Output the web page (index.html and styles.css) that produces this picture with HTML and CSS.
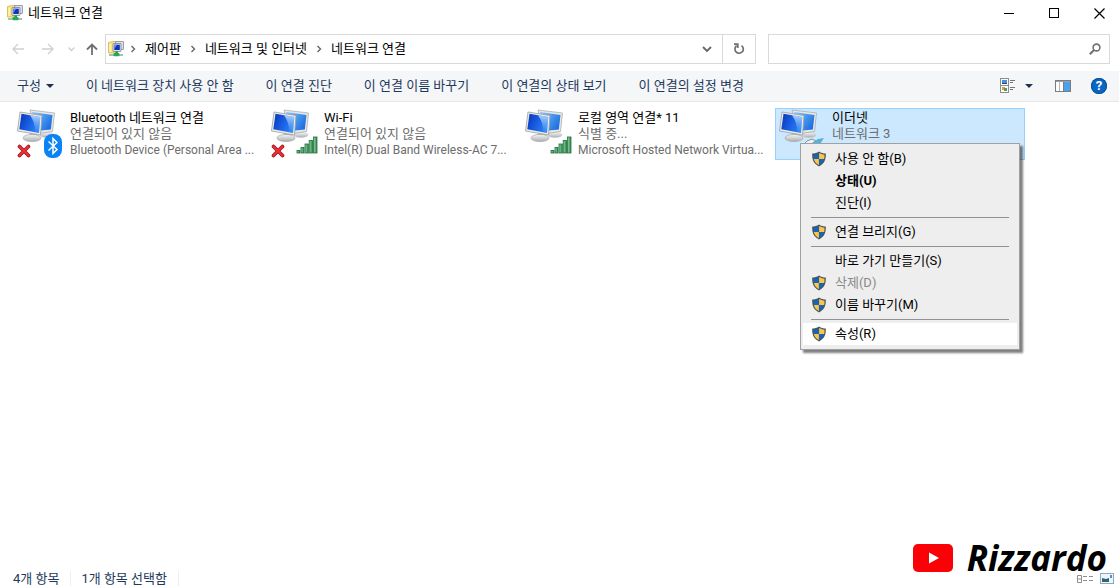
FILE: index.html
```html
<!DOCTYPE html>
<html lang="ko">
<head>
  <meta charset="UTF-8">
  <meta name="viewport" content="width=device-width, initial-scale=1.0">
  <title>네트워크 연결</title>
  <link rel="stylesheet" href="styles.css">
</head>
<body>
  <!-- Shared icons -->
  <svg class="defs" width="0" height="0" aria-hidden="true">
    <defs>
      <linearGradient id="screen-blue" x1="0" y1="0.3" x2="1" y2="0.7">
        <stop offset="0" stop-color="#0a3cc0"/>
        <stop offset="0.5" stop-color="#1a62e6"/>
        <stop offset="1" stop-color="#2f86f2"/>
      </linearGradient>
      <linearGradient id="screen-light" x1="0" y1="0" x2="1" y2="0.6">
        <stop offset="0" stop-color="#9cc9f6"/>
        <stop offset="0.5" stop-color="#4d9bf0"/>
        <stop offset="1" stop-color="#1f6fe0"/>
      </linearGradient>
      <linearGradient id="shine" x1="0" y1="0" x2="0" y2="1">
        <stop offset="0" stop-color="#d4ecff" stop-opacity="0.8"/>
        <stop offset="1" stop-color="#6fb4fa" stop-opacity="0.1"/>
      </linearGradient>
      <linearGradient id="metal" x1="0" y1="0" x2="0" y2="1">
        <stop offset="0" stop-color="#f6f6f4"/>
        <stop offset="1" stop-color="#a9adb0"/>
      </linearGradient>
      <linearGradient id="bar-green" x1="0" y1="0" x2="1" y2="0">
        <stop offset="0" stop-color="#8fd3a0"/>
        <stop offset="1" stop-color="#2f8a50"/>
      </linearGradient>

      <symbol id="i-monitors" viewBox="0 0 40 36">
        <ellipse cx="30" cy="26" rx="7" ry="2.600" fill="url(#metal)" stroke="#c2c5c7" stroke-width="0.5"/>
        <path d="M13 1 L37.500 4 L35.500 22.500 L18 25 Z" fill="#e6e7e6" stroke="#a3a6a8" stroke-width="0.700"/>
        <path d="M15 3 L35.500 6 L33.800 20.500 L19 22 Z" fill="url(#screen-light)"/>
        <path d="M13 24 L20 25 L19 30 L12 30 Z" fill="#b9bdc0"/>
        <ellipse cx="15" cy="29" rx="9" ry="3.600" fill="url(#metal)" stroke="#a4a7a9" stroke-width="0.7"/>
        <path d="M3 3 L25 6.500 L23.500 26 L0.500 22 Z" fill="#ededeb" stroke="#999da0" stroke-width="0.8"/>
        <path d="M4.500 4.800 L23.300 8 L22 24 L2.300 20.300 Z" fill="url(#screen-blue)"/>
        <path d="M13 6.200 L23.300 8 L22 24 L18.500 23.300 Q18 13 13 6.200 Z" fill="url(#shine)"/>
      </symbol>

      <symbol id="i-cross" viewBox="0 0 14 14">
        <path d="M2.500 2.500 L11.500 11.500 M11.500 2.500 L2.500 11.500" stroke="#9d1018" stroke-width="3.600" stroke-linecap="round"/>
        <path d="M2.500 2.500 L11.500 11.500 M11.500 2.500 L2.500 11.500" stroke="#ea3038" stroke-width="2.200" stroke-linecap="round"/>
      </symbol>

      <symbol id="i-bluetooth" viewBox="0 0 18 24">
        <rect width="18" height="24" rx="8" fill="#0a84f5"/>
        <path d="M4.500 7.500 L13 15.500 L9 19.500 V4.500 L13 8.500 L4.500 16.500" fill="none" stroke="#fff" stroke-width="1.500"/>
      </symbol>

      <symbol id="i-signal" viewBox="0 0 22 18">
        <g fill="url(#bar-green)" stroke="#226c3e" stroke-width="0.8">
          <rect x="1" y="14.500" width="3" height="2.500"/>
          <rect x="5" y="11.500" width="3" height="5.500"/>
          <rect x="9" y="8" width="3.300" height="9"/>
          <rect x="13.200" y="4.500" width="3.300" height="12.500"/>
          <rect x="17.500" y="1" width="3.500" height="16"/>
        </g>
      </symbol>

      <symbol id="i-cable" viewBox="0 0 22 18">
        <path d="M0 12 V8 L3 5 L8 3 L12 5 L6 9 Z" fill="#eef3f5" stroke="#6b7a84" stroke-width="0.8"/>
        <path d="M8 7 L14 3 L20 2 L16 8 L11 10 Z" fill="#4fb3dc"/>
      </symbol>

      <symbol id="i-network" viewBox="0 0 16 16">
        <path d="M0.500 1.500 L5 0.500 H9 V12 H0.500 Z" fill="#f7e27c" stroke="#d5b545" stroke-width="0.800"/>
        <path d="M1.500 3 L3 2.500 V11 H1.500 Z" fill="#fff5b8"/>
        <rect x="7.500" y="0.500" width="8" height="8" rx="0.500" fill="#d9dfe6" stroke="#75818e" stroke-width="0.700"/>
        <rect x="5" y="2.500" width="8" height="8" rx="0.500" fill="#dfe5ea" stroke="#6b7683" stroke-width="0.700"/>
        <rect x="6.300" y="3.700" width="5.500" height="5.300" fill="#1431ba"/>
        <path d="M6.300 3.700 H9 L7 7 H6.300 Z" fill="#6f8bf0"/>
        <path d="M7.500 10.500 H10 V12.500 H7.500 Z" fill="#1e9a55"/>
        <path d="M1 14 H15" stroke="#9fc7ae" stroke-width="2"/>
        <rect x="5.500" y="12" width="6" height="3.300" rx="1" fill="#25a75f"/>
      </symbol>

      <symbol id="i-shield" viewBox="0 0 16 16">
        <path d="M8 0.600 C6 2 3.600 2.600 1.200 2.600 C1 8.500 2.500 12.800 8 15.500 C13.500 12.800 15 8.500 14.800 2.600 C12.400 2.600 10 2 8 0.600 Z" fill="#4a5157"/>
        <path d="M7.900 2.100 C6.400 3 4.400 3.600 2.500 3.700 Q2.400 6 2.800 7.900 H7.900 Z" fill="#1565b8"/>
        <path d="M8.100 2.100 C9.600 3 11.600 3.600 13.500 3.700 Q13.600 6 13.200 7.900 H8.100 Z" fill="#fcc549"/>
        <path d="M2.800 8 Q4 12.300 7.900 14.200 V8 Z" fill="#fcc549"/>
        <path d="M13.200 8 Q12 12.300 8.100 14.200 V8 Z" fill="#1565b8"/>
      </symbol>

      <symbol id="i-crumb" viewBox="0 0 6 8">
        <path d="M1.500 1 L4.500 4 L1.500 7" fill="none" stroke="#666" stroke-width="1.400"/>
      </symbol>

      <symbol id="i-caret" viewBox="0 0 8 4">
        <path d="M0 0 H8 L4 4 Z" fill="#1e3250"/>
      </symbol>
    </defs>
  </svg>

  <header class="titlebar">
    <svg class="icon16"><use href="#i-network"/></svg>
    <h1>네트워크 연결</h1>
    <div class="window-buttons">
      <button type="button" aria-label="최소화">
        <svg width="11" height="11"><path d="M0 5.500 H10" stroke="#000"/></svg>
      </button>
      <button type="button" aria-label="최대화">
        <svg width="11" height="11"><rect x="0.500" y="0.500" width="9" height="9" fill="none" stroke="#000"/></svg>
      </button>
      <button type="button" aria-label="닫기">
        <svg width="11" height="11"><path d="M0.500 0.500 L10.500 10.500 M10.500 0.500 L0.500 10.500" stroke="#000" stroke-width="1.200"/></svg>
      </button>
    </div>
  </header>

  <div class="navbar">
    <nav class="history">
      <button type="button" aria-label="뒤로" disabled>
        <svg width="12" height="12" fill="none" stroke="#d0d0d0" stroke-width="1.400"><path d="M12 6 H1 M6 1 L1 6 L6 11"/></svg>
      </button>
      <button type="button" aria-label="앞으로" disabled>
        <svg width="12" height="12" fill="none" stroke="#d0d0d0" stroke-width="1.400"><path d="M0 6 H11 M6 1 L11 6 L6 11"/></svg>
      </button>
      <button type="button" class="recent" aria-label="최근 위치" disabled>
        <svg width="7" height="5" fill="none" stroke="#d0d0d0" stroke-width="1.400"><path d="M0.500 0.500 L3.500 3.500 L6.500 0.500"/></svg>
      </button>
      <button type="button" class="up" aria-label="위로">
        <svg width="12" height="12" fill="none" stroke="#707070" stroke-width="1.800"><path d="M6 12 V1.500 M1 6.500 L6 1.500 L11 6.500"/></svg>
      </button>
    </nav>

    <div class="address">
      <svg class="icon16"><use href="#i-network"/></svg>
      <svg class="crumb"><use href="#i-crumb"/></svg>
      <a href="#">제어판</a>
      <svg class="crumb"><use href="#i-crumb"/></svg>
      <a href="#">네트워크 및 인터넷</a>
      <svg class="crumb"><use href="#i-crumb"/></svg>
      <a href="#">네트워크 연결</a>
      <button type="button" class="drop" aria-label="이전 위치">
        <svg width="10" height="7" fill="none" stroke="#666" stroke-width="1.800"><path d="M1 1 L5 5 L9 1"/></svg>
      </button>
      <button type="button" class="refresh" aria-label="새로 고침">
        <svg width="12" height="12" fill="none" stroke="#707070" stroke-width="1.700"><path d="M8.500 2.600 A4.200 4.200 0 1 1 3.600 2.700"/><path d="M1 1.200 H4.800 V5"/></svg>
      </button>
    </div>

    <div class="search">
      <input type="search" aria-label="검색">
      <svg width="12" height="12" fill="none" stroke="#707070"><circle cx="7.500" cy="4.500" r="3.400" stroke-width="1.600"/><path d="M5 7 L0.800 11.200" stroke-width="2"/></svg>
    </div>
  </div>

  <div class="toolbar">
    <button type="button">구성 <svg class="caret"><use href="#i-caret"/></svg></button>
    <button type="button">이 네트워크 장치 사용 안 함</button>
    <button type="button">이 연결 진단</button>
    <button type="button">이 연결 이름 바꾸기</button>
    <button type="button">이 연결의 상태 보기</button>
    <button type="button">이 연결의 설정 변경</button>

    <div class="view-tools">
      <button type="button" aria-label="보기 변경">
        <svg width="16" height="16">
          <rect x="0.500" y="0.500" width="8" height="7" fill="#fff" stroke="#8a8f94"/>
          <rect x="0.500" y="7.500" width="8" height="7" fill="#fff" stroke="#8a8f94"/>
          <rect x="2" y="2" width="5" height="4" fill="#4b8fd6"/>
          <path d="M2 5 H7 V6 H2 Z" fill="#2b4c66"/>
          <rect x="2" y="9" width="3" height="3" fill="#d9a13a"/>
          <rect x="4" y="10" width="3" height="3" fill="#5c9a55"/>
          <path d="M10 2.500 H15 M10 4.500 H13 M10 9.500 H15 M10 11.500 H13" stroke="#70757a"/>
        </svg>
      </button>
      <button type="button" class="view-more" aria-label="기타 옵션"><svg class="caret"><use href="#i-caret"/></svg></button>
      <button type="button" class="preview" aria-label="미리 보기 창">
        <svg width="16" height="12">
          <rect x="0.500" y="0.500" width="15" height="11" fill="#fff" stroke="#777c80"/>
          <rect x="1" y="1" width="14" height="1" fill="#9ba1a6"/>
          <path d="M4.500 2 V11" stroke="#b4b8bb"/>
          <rect x="9" y="2" width="6" height="9" fill="#4aa3ea"/>
          <path d="M8.500 2 V11" stroke="#777c80"/>
        </svg>
      </button>
      <button type="button" aria-label="도움말" class="help">?</button>
    </div>
  </div>

  <main class="connections">
    <article class="connection">
      <div class="device">
        <svg class="monitors"><use href="#i-monitors"/></svg>
        <svg class="cross"><use href="#i-cross"/></svg>
        <svg class="bluetooth"><use href="#i-bluetooth"/></svg>
      </div>
      <div class="info">
        <h2>Bluetooth 네트워크 연결</h2>
        <p>연결되어 있지 않음</p>
        <p class="adapter">Bluetooth Device (Personal Area ...</p>
      </div>
    </article>

    <article class="connection">
      <div class="device">
        <svg class="monitors"><use href="#i-monitors"/></svg>
        <svg class="cross"><use href="#i-cross"/></svg>
        <svg class="signal"><use href="#i-signal"/></svg>
      </div>
      <div class="info">
        <h2>Wi-Fi</h2>
        <p>연결되어 있지 않음</p>
        <p class="adapter">Intel(R) Dual Band Wireless-AC 7...</p>
      </div>
    </article>

    <article class="connection">
      <div class="device">
        <svg class="monitors"><use href="#i-monitors"/></svg>
        <svg class="signal"><use href="#i-signal"/></svg>
      </div>
      <div class="info">
        <h2>로컬 영역 연결* 11</h2>
        <p>식별 중...</p>
        <p class="adapter">Microsoft Hosted Network Virtua...</p>
      </div>
    </article>

    <article class="connection selected">
      <div class="device">
        <svg class="monitors"><use href="#i-monitors"/></svg>
        <svg class="signal"><use href="#i-cable"/></svg>
      </div>
      <div class="info">
        <h2>이더넷</h2>
        <p>네트워크 3</p>
      </div>

      <div class="context-menu">
        <button type="button"><svg class="shield"><use href="#i-shield"/></svg>사용 안 함(B)</button>
        <button type="button" class="default">상태(U)</button>
        <button type="button">진단(I)</button>
        <hr>
        <button type="button"><svg class="shield"><use href="#i-shield"/></svg>연결 브리지(G)</button>
        <hr>
        <button type="button">바로 가기 만들기(S)</button>
        <button type="button" disabled><svg class="shield"><use href="#i-shield"/></svg>삭제(D)</button>
        <button type="button"><svg class="shield"><use href="#i-shield"/></svg>이름 바꾸기(M)</button>
        <hr>
        <button type="button" class="active"><svg class="shield"><use href="#i-shield"/></svg>속성(R)</button>
      </div>
    </article>
  </main>

  <footer class="statusbar">
    <span>4개 항목</span>
    <span>1개 항목 선택함</span>
    <div class="layout-buttons">
      <button type="button" aria-label="자세히">
        <svg width="16" height="8"><path d="M0.500 0.500 H4.500 V7.500 H0.500 Z M0.500 4 H4.500" fill="none" stroke="#8c9094"/><path d="M6 1.500 H10 M6 5.500 H10 M12 1.500 H16 M12 5.500 H16" stroke="#8c9094"/></svg>
      </button>
      <button type="button" aria-label="큰 아이콘">
        <svg width="14" height="11"><rect x="0.500" y="0.500" width="13" height="10" fill="#eef5fa" stroke="#8fa9bb"/><path d="M2 5 L6 6 L9 5 V9 H2 Z" fill="#2f6577"/><rect x="10" y="2" width="2" height="3" fill="#4a90e0"/></svg>
      </button>
    </div>
  </footer>

  <div class="watermark">
    <svg width="40" height="28" viewBox="0 0 40 28"><rect width="40" height="28" rx="5" fill="#fb0007"/><path d="M16 8.500 L26 14 L16 19.500 Z" fill="#fff"/></svg>
    <span>Rizzardo</span>
  </div>
</body>
</html>
```
FILE: styles.css
```css
* {
  box-sizing: border-box;
}
body {
  margin: 0;
  min-height: 100vh;
  display: flex;
  flex-direction: column;
  position: relative;
  background-color: #fff;
  color: #000;
  font-family: Roboto, "Noto Sans CJK KR", sans-serif;
  font-size: 13px;
  line-height: 16px;
}
h1, h2, p {
  margin: 0;
  font-size: inherit;
  font-weight: 400;
}
a {
  color: inherit;
  text-decoration: none;
}
button {
  margin: 0;
  padding: 0;
  border: none;
  background: none;
  color: inherit;
  font: inherit;
  white-space: nowrap;
}
svg {
  display: block;
  flex-shrink: 0;
}
.defs {
  position: absolute;
}
.icon16 {
  width: 16px;
  height: 16px;
}

/* Title bar */
.titlebar {
  display: flex;
  align-items: center;
  gap: 5px;
  height: 26px;
  padding-left: 7px;
}
.window-buttons {
  display: flex;
  gap: 5px;
  margin-left: auto;
}
.window-buttons button {
  display: flex;
  align-items: center;
  justify-content: center;
  width: 40px;
  height: 26px;
}

/* Address row */
.navbar {
  display: flex;
  align-items: center;
  padding: 8px 9px 7px 12px;
}
.history {
  display: flex;
  align-items: center;
  gap: 18px;
  width: 93px;
}
.history .recent {
  margin-left: -4px;
}
.history .up {
  margin-left: -7px;
}
.address {
  display: flex;
  align-items: center;
  flex: 39 1 0;
  height: 30px;
  padding-left: 2px;
  border: 1px solid #d9d9d9;
  white-space: nowrap;
}
.address .icon16 {
  margin-right: 2px;
}
.address a {
  padding: 0 5px;
}
.crumb {
  width: 6px;
  height: 8px;
  margin: 0 4px;
}
.address .drop {
  margin-left: auto;
  padding: 0 10px;
}
.address .refresh {
  display: flex;
  align-items: center;
  justify-content: center;
  align-self: stretch;
  width: 33px;
  border-left: 1px solid #d9d9d9;
}
.search {
  display: flex;
  align-items: center;
  flex: 20 1 0;
  height: 30px;
  margin-left: 12px;
  padding-right: 8px;
  border: 1px solid #d9d9d9;
}
.search input {
  flex: 1;
  min-width: 0;
  border: none;
  outline: none;
  background: none;
  font: inherit;
}

/* Command bar */
.toolbar {
  display: flex;
  align-items: center;
  gap: 32px;
  height: 31px;
  padding: 0 12px 0 17px;
  border-bottom: 1px solid #e4e6e8;
  background-color: #f4f6f8;
  color: #1e395b;
}
.toolbar button {
  display: flex;
  align-items: center;
  gap: 5px;
}
.caret {
  width: 8px;
  height: 4px;
}
.view-tools {
  display: flex;
  align-items: center;
  margin-left: auto;
}
.view-tools .view-more {
  margin-left: 9px;
}
.view-tools .preview {
  margin: 0 20px 0 22px;
}
.toolbar .help {
  justify-content: center;
  width: 16px;
  height: 16px;
  border-radius: 50%;
  background-color: #0a66c2;
  box-shadow: 0 0 0 1px #0b5296 inset;
  color: #fff;
  font-weight: 700;
}

/* Connection list */
.connections {
  display: grid;
  grid-template-columns: repeat(auto-fill, 250px);
  align-content: start;
  gap: 4px;
  flex: 1;
  padding: 6px 13px;
}
.connection {
  display: flex;
  position: relative;
  height: 52px;
  border: 1px solid transparent;
}
.connection.selected {
  border-color: #99d1ff;
  background-color: #cce8ff;
}
.device {
  position: relative;
  width: 47px;
  margin-left: 3px;
}
.monitors {
  width: 40px;
  height: 36px;
}
.cross,
.bluetooth,
.signal {
  position: absolute;
}
.cross {
  left: 0;
  top: 35px;
  width: 14px;
  height: 14px;
}
.bluetooth {
  left: 27px;
  top: 25px;
  width: 18px;
  height: 24px;
}
.signal {
  left: 25px;
  top: 27px;
  width: 22px;
  height: 18px;
}
.info {
  flex: 1;
  min-width: 0;
  padding: 1px 0 0 6px;
}
.info h2,
.info p {
  overflow: hidden;
  text-overflow: ellipsis;
  white-space: nowrap;
}
.info p {
  color: #6d6d6d;
}
.info .adapter {
  font-size: 12px;
}

/* Context menu */
.context-menu {
  position: absolute;
  left: 24px;
  top: 34px;
  z-index: 1;
  width: 220px;
  padding: 4px 2px;
  border: 1px solid #a0a0a0;
  background-color: #eee;
  box-shadow: 3px 3px 2px rgba(0, 0, 0, 0.5);
}
.context-menu button {
  display: flex;
  align-items: center;
  position: relative;
  width: 100%;
  height: 22px;
  padding-left: 32px;
}
.context-menu button:disabled {
  color: #8a8a8a;
}
.context-menu .default {
  font-weight: 700;
}
.context-menu .active {
  background-color: #fff;
}
.context-menu hr {
  margin: 3px 8px;
  border: none;
  border-top: 1px solid #919191;
}
.shield {
  width: 16px;
  height: 16px;
  margin: 0 8px 0 -24px;
}

/* Status bar */
.statusbar {
  display: flex;
  align-items: center;
  height: 15px;
  padding: 0 5px 0 13px;
  color: #1e395b;
}
.statusbar span {
  padding-right: 11px;
  margin-right: 10px;
  border-right: 1px solid #eee;
}
.layout-buttons {
  display: flex;
  align-items: center;
  gap: 7px;
  margin-left: auto;
}

/* Channel watermark */
.watermark {
  display: flex;
  align-items: center;
  gap: 14px;
  position: absolute;
  right: 12px;
  bottom: 8px;
  font-family: "Open Sans", sans-serif;
  font-size: 35px;
  font-style: italic;
  font-weight: 700;
  line-height: 40px;
}
```
